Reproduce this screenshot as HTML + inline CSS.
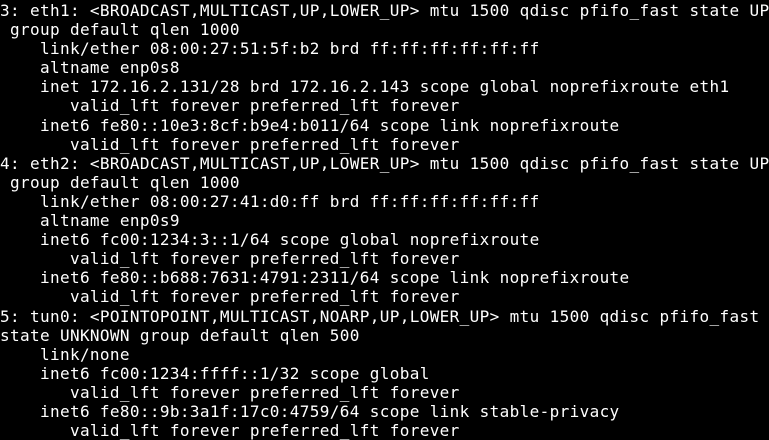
<!DOCTYPE html>
<html><head><meta charset="utf-8"><style>
html,body{margin:0;padding:0;background:#000;width:769px;height:436px;overflow:hidden}
pre{margin:0;position:absolute;top:1px;left:0;color:#fff;font-family:"DejaVu Sans Mono","Liberation Mono",monospace;font-size:16px;line-height:19.1px;letter-spacing:0.36px;white-space:pre}
</style></head><body><pre>3: eth1: &lt;BROADCAST,MULTICAST,UP,LOWER_UP&gt; mtu 1500 qdisc pfifo_fast state UP
 group default qlen 1000
    link/ether 08:00:27:51:5f:b2 brd ff:ff:ff:ff:ff:ff
    altname enp0s8
    inet 172.16.2.131/28 brd 172.16.2.143 scope global noprefixroute eth1
       valid_lft forever preferred_lft forever
    inet6 fe80::10e3:8cf:b9e4:b011/64 scope link noprefixroute
       valid_lft forever preferred_lft forever
4: eth2: &lt;BROADCAST,MULTICAST,UP,LOWER_UP&gt; mtu 1500 qdisc pfifo_fast state UP
 group default qlen 1000
    link/ether 08:00:27:41:d0:ff brd ff:ff:ff:ff:ff:ff
    altname enp0s9
    inet6 fc00:1234:3::1/64 scope global noprefixroute
       valid_lft forever preferred_lft forever
    inet6 fe80::b688:7631:4791:2311/64 scope link noprefixroute
       valid_lft forever preferred_lft forever
5: tun0: &lt;POINTOPOINT,MULTICAST,NOARP,UP,LOWER_UP&gt; mtu 1500 qdisc pfifo_fast
state UNKNOWN group default qlen 500
    link/none
    inet6 fc00:1234:ffff::1/32 scope global
       valid_lft forever preferred_lft forever
    inet6 fe80::9b:3a1f:17c0:4759/64 scope link stable-privacy
       valid_lft forever preferred_lft forever</pre></body></html>
